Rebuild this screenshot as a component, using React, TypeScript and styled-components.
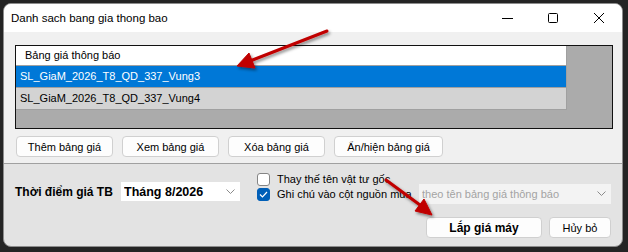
import styled, { createGlobalStyle } from "styled-components";

const GlobalStyle = createGlobalStyle`
  html, body {
    margin: 0;
    padding: 0;
    background: #242424;
  }
  body {
    font-family: "Liberation Sans", Arial, sans-serif;
    font-size: 11px;
    color: #000;
  }
`;

const Screen = styled.div`
  width: 628px;
  height: 252px;
  padding: 3px 0 0 3px;
  box-sizing: border-box;
  position: relative;
`;

const Window = styled.div`
  width: 620px;
  height: 244px;
  box-sizing: border-box;
  border: 1px solid #8c8c8c;
  border-radius: 8px;
  overflow: hidden;
  display: flex;
  flex-direction: column;
  background: #e3e3e3;
`;

const TitleBar = styled.div`
  height: 28px;
  flex-shrink: 0;
  background: #fff;
  display: flex;
  align-items: center;
  padding-left: 7px;
`;

const Title = styled.span`
  flex: 1;
  font-size: 11.5px;
  color: #000;
`;

const Caption = styled.div`
  width: ${(p: { w: number }) => p.w}px;
  height: 28px;
  display: flex;
  align-items: center;
  justify-content: center;
`;

const TopPanel = styled.div`
  background: #f0f0f0;
  padding: 13px 0 6px 11px;
  border-bottom: 1px solid #a0a0a0;
`;

const ListBox = styled.div`
  width: 598px;
  height: 84px;
  box-sizing: border-box;
  border: 1px solid #111;
  background: #ababab;
`;

const Rows = styled.div`
  width: 551px;
  display: flex;
  flex-direction: column;
`;

const Row = styled.div<{ kind: "head" | "sel" | "item" }>`
  height: ${(p) => (p.kind === "head" ? 19 : 21)}px;
  line-height: ${(p) => (p.kind === "head" ? 19 : 21)}px;
  padding-left: ${(p) => (p.kind === "head" ? 9 : 4)}px;
  border-bottom: 1px solid #a0a0a0;
  border-right: 1px solid #a0a0a0;
  background: ${(p) =>
    p.kind === "head" ? "#fff" : p.kind === "sel" ? "#0078d7" : "#d3d3d3"};
  color: ${(p) => (p.kind === "sel" ? "#fff" : "#000")};
  white-space: nowrap;
`;

const ButtonRow = styled.div`
  display: flex;
  gap: 9px;
  margin-top: 7px;
  padding-left: 1px;
`;

const Button = styled.div<{ w: number; bold?: boolean }>`
  width: ${(p) => p.w}px;
  height: 21px;
  box-sizing: border-box;
  border: 1px solid #d0d0d0;
  border-radius: 4px;
  background: #fdfdfd;
  display: flex;
  align-items: center;
  justify-content: center;
  font-weight: ${(p) => (p.bold ? 700 : 400)};
  font-size: ${(p) => (p.bold ? 12 : 11)}px;
  white-space: nowrap;
`;

const BottomPanel = styled.div`
  flex: 1;
  padding: 8px 11px 0 11px;
  display: flex;
  flex-direction: column;
`;

const OptionLine = styled.div`
  display: flex;
  align-items: flex-start;
`;

const Label = styled.div`
  width: 107px;
  margin-top: 10px;
  line-height: 20px;
  font-size: 12px;
  font-weight: 700;
  white-space: nowrap;
`;

const Combo = styled.div<{ w: number; top: number; disabled?: boolean }>`
  width: ${(p) => p.w}px;
  height: ${(p) => (p.disabled ? 20 : 19)}px;
  margin-top: ${(p) => p.top}px;
  box-sizing: border-box;
  background: ${(p) => (p.disabled ? "#f3f3f3" : "#fff")};
  color: ${(p) => (p.disabled ? "#a3a3a3" : "#000")};
  font-weight: ${(p) => (p.disabled ? 400 : 700)};
  font-size: ${(p) => (p.disabled ? 11 : 12.5)}px;
  display: flex;
  align-items: center;
  padding: 0 5px 0 3px;
  white-space: nowrap;
  flex-shrink: 0;
`;

const ComboText = styled.span`
  flex: 1;
  overflow: hidden;
`;

const CheckGroup = styled.div`
  width: 162px;
  margin-left: 17px;
  flex-shrink: 0;
  display: flex;
  flex-direction: column;
  gap: 1px;
`;

const CheckRow = styled.div`
  height: 14px;
  display: flex;
  align-items: center;
  gap: 7px;
  white-space: nowrap;
  font-size: 11px;
`;

const Box = styled.div<{ checked?: boolean }>`
  width: 13px;
  height: 13px;
  box-sizing: border-box;
  border-radius: 3px;
  flex-shrink: 0;
  border: 1px solid ${(p) => (p.checked ? "#005fb8" : "#858585")};
  background: ${(p) => (p.checked ? "#005fb8" : "#fff")};
  display: flex;
  align-items: center;
  justify-content: center;
`;

const Actions = styled.div`
  display: flex;
  justify-content: flex-end;
  gap: 7px;
  margin-top: 13px;
`;

const Overlay = styled.svg`
  position: absolute;
  left: 0;
  top: 0;
  pointer-events: none;
`;

function Chevron() {
  return (
    <svg width="9" height="6" viewBox="0 0 9 6">
      <path d="M0.5 0.5 L4.5 4.5 L8.5 0.5" fill="none" stroke="#8a8a8a" strokeWidth="1" />
    </svg>
  );
}

export default function App() {
  return (
    <>
      <GlobalStyle />
      <Screen>
        <Window>
          <TitleBar>
            <Title>Danh sach bang gia thong bao</Title>
            <Caption w={46}>
              <svg width="11" height="11" viewBox="0 0 11 11">
                <path d="M0 5.5 H11" stroke="#000" strokeWidth="1" />
              </svg>
            </Caption>
            <Caption w={46}>
              <svg width="10" height="10" viewBox="0 0 10 10">
                <rect x="0.5" y="0.5" width="9" height="9" rx="1" fill="none" stroke="#000" />
              </svg>
            </Caption>
            <Caption w={46}>
              <svg width="10" height="10" viewBox="0 0 10 10">
                <path d="M0 0 L10 10 M10 0 L0 10" stroke="#000" strokeWidth="1" />
              </svg>
            </Caption>
          </TitleBar>
          <TopPanel>
            <ListBox>
              <Rows>
                <Row kind="head">Bảng giá thông báo</Row>
                <Row kind="sel">SL_GiaM_2026_T8_QD_337_Vung3</Row>
                <Row kind="item">SL_GiaM_2026_T8_QD_337_Vung4</Row>
              </Rows>
            </ListBox>
            <ButtonRow>
              <Button w={97}>Thêm bảng giá</Button>
              <Button w={97}>Xem bảng giá</Button>
              <Button w={97}>Xóa bảng giá</Button>
              <Button w={109}>Ẩn/hiện bảng giá</Button>
            </ButtonRow>
          </TopPanel>
          <BottomPanel>
            <OptionLine>
              <Label>Thời điểm giá TB</Label>
              <Combo w={119} top={10}>
                <ComboText>Tháng 8/2026</ComboText>
                <Chevron />
              </Combo>
              <CheckGroup>
                <CheckRow>
                  <Box />
                  Thay thế tên vật tư gốc
                </CheckRow>
                <CheckRow>
                  <Box checked>
                    <svg width="9" height="7" viewBox="0 0 9 7">
                      <path d="M1 3.5 L3.5 6 L8 1" fill="none" stroke="#fff" strokeWidth="1.2" />
                    </svg>
                  </Box>
                  Ghi chú vào cột nguồn mua
                </CheckRow>
              </CheckGroup>
              <Combo w={192} top={12} disabled>
                <ComboText>theo tên bảng giá thông báo</ComboText>
                <Chevron />
              </Combo>
            </OptionLine>
            <Actions>
              <Button w={116} bold>
                Lắp giá máy
              </Button>
              <Button w={62}>Hủy bỏ</Button>
            </Actions>
          </BottomPanel>
        </Window>
        <Overlay width="628" height="252" viewBox="0 0 628 252">
          <defs>
            <filter id="sh" x="-20%" y="-20%" width="140%" height="140%">
              <feDropShadow dx="1.5" dy="2" stdDeviation="1.5" floodColor="#000" floodOpacity="0.45" />
            </filter>
          </defs>
          <g filter="url(#sh)" fill="#c00000" stroke="#c00000">
            <path d="M327 31 L250 61" strokeWidth="3" strokeLinecap="round" />
            <path d="M237 66 L249 53 L255 68 Z" strokeWidth="1" strokeLinejoin="round" />
            <path d="M386 180 L420 205" strokeWidth="3" strokeLinecap="round" />
            <path d="M432 215 L415 211 L424 199 Z" strokeWidth="1" strokeLinejoin="round" />
          </g>
        </Overlay>
      </Screen>
    </>
  );
}
